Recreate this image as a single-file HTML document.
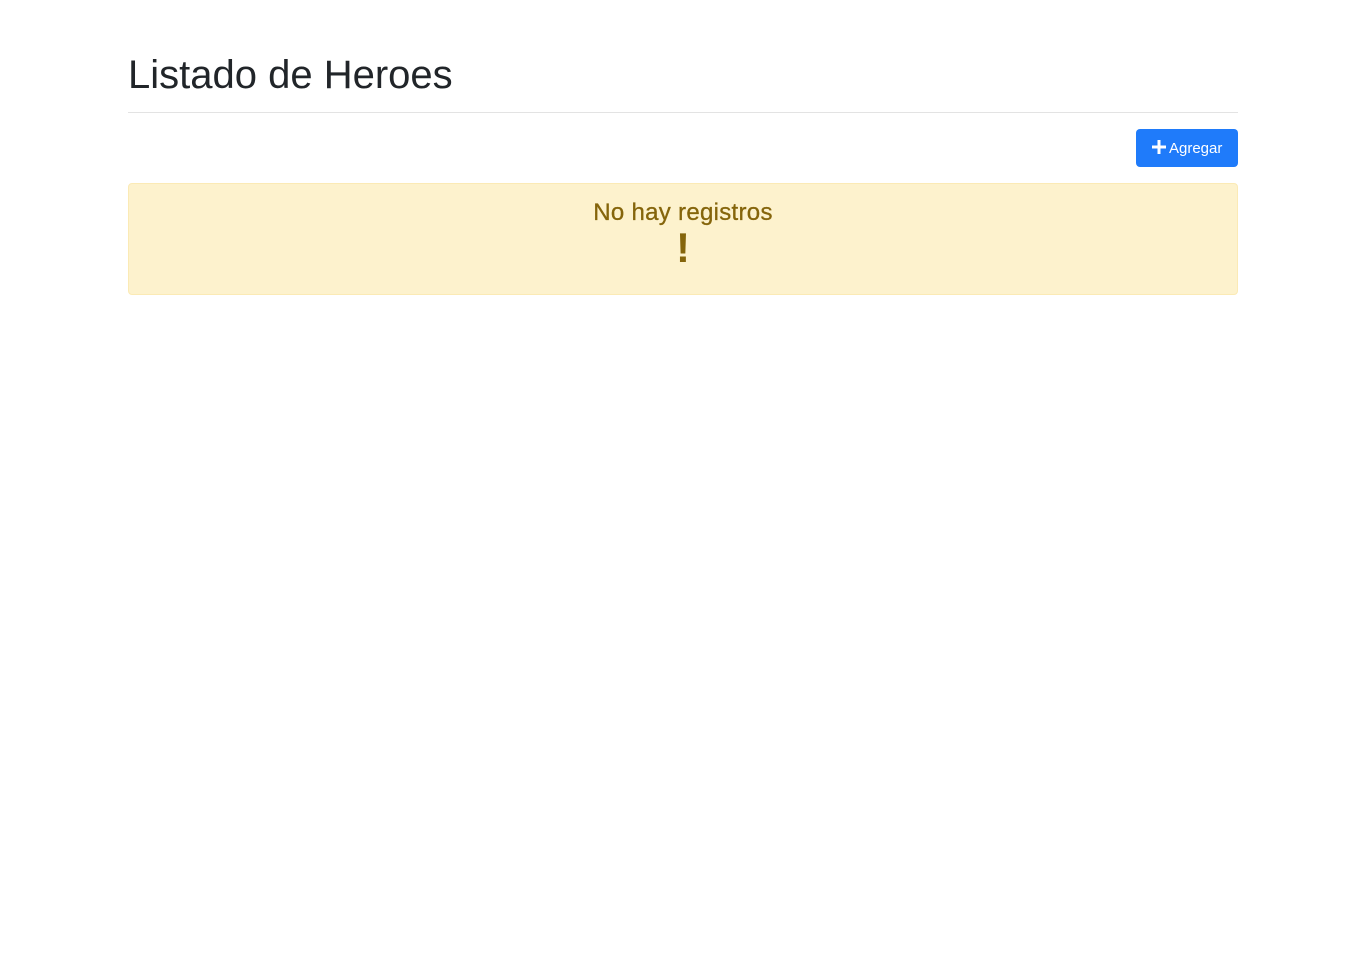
<!DOCTYPE html>
<html><head><meta charset="utf-8"><style>
body{margin:0;background:#fff;font-family:"Liberation Sans",sans-serif;color:#212529}
h1{position:absolute;left:128px;top:51px;margin:0;font-size:40px;font-weight:normal;line-height:48px;letter-spacing:0}
.hr{position:absolute;left:128px;top:112px;width:1110px;height:1px;background:#e3e3e3}
.btn{position:absolute;left:1136px;top:129px;width:102px;height:38px;background:#1f7bfa;border-radius:4px;color:#fff;font-size:15px;line-height:40px;text-align:center}
.alert{position:absolute;left:128px;top:183px;width:1108px;height:110px;background:#fdf2cd;border:1px solid #fbeab5;border-radius:4px;color:#85650b;text-align:center}
.t{margin-top:14px;font-size:24px;line-height:30px;letter-spacing:0.3px;-webkit-text-stroke:0.3px #85650b}
.ex{font-size:42px;font-weight:bold;line-height:40px}
</style></head><body>
<h1>Listado de Heroes</h1>
<div class="hr"></div>
<div class="btn"><svg width="14" height="14" viewBox="0 0 14 14" style="vertical-align:-1px"><path d="M5.5 0h3v5.5H14v3H8.5V14h-3V8.5H0v-3h5.5z" fill="#fff"/></svg> Agregar</div>
<div class="alert"><div class="t">No hay registros</div><div class="ex">!</div></div>
</body></html>
